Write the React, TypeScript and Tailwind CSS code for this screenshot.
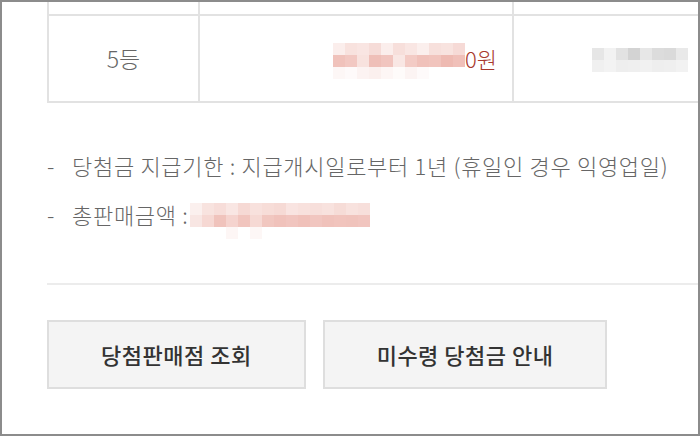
import React from "react";

const FONT = '"Noto Sans CJK KR", "Noto Sans", sans-serif';

// 모자이크(가림 처리) 블록
const Mosaic: React.FC<{ rows: string[][]; cw: number; ch: number }> = ({ rows, cw, ch }) => (
  <div className="flex flex-col">
    {rows.map((row, i) => (
      <div key={i} className="flex">
        {row.map((c, j) => (
          <div key={j} style={{ width: cw, height: ch, background: c }} />
        ))}
      </div>
    ))}
  </div>
);

const pinkRow: string[][] = [
  ["#fbeeec", "#f8e2de", "#f9e5e2", "#f6dcd8", "#fbeeec", "#f7dfdb", "#f9e6e3", "#fbefed", "#f7e0dc", "#f8e3df", "#f6dad6"],
  ["#f0c2bb", "#f2c8c2", "#f8e2de", "#efbfb8", "#f1c5bf", "#f9e7e4", "#f3cbc5", "#f0c1ba", "#f1c4bd", "#eebab2", "#f0c0b9"],
  ["#fdf7f6", "#fefafa", "#fcf3f2", "#fbf0ee", "#fdf6f5", "#fefbfa", "#fcf4f3", "#fefafa", "#ffffff", "#ffffff", "#ffffff"],
];

const grayRow: string[][] = [
  ["#e6e6e6", "#f2f2f2", "#e2e2e2", "#d3d3d3", "#e7e7e7", "#dcdcdc", "#dadada", "#e9e9e9"],
  ["#f0f0f0", "#f3f3f3", "#eeeeee", "#efefef", "#f1f1f1", "#eeeeee", "#efefef", "#f2f2f2"],
];

const salesRow: string[][] = [
  ["#fbf0ee", "#f8e3df", "#f7ddd9", "#f9e6e3", "#f6d9d4", "#f8e1dd", "#f7ddd8", "#f6dad5", "#f9e4e1", "#f8e1dd", "#f7dfdb", "#f8e2de", "#f6dcd7", "#f8e2de", "#f7dfdb"],
  ["#f8e6e3", "#f6d8d3", "#f0c3bc", "#f5d3ce", "#f1c5be", "#f6d9d4", "#f1c7c0", "#f0c2bb", "#f1c5bf", "#f0c1ba", "#f1c6c0", "#f0c2bb", "#f1c4bd", "#f0c3bc", "#f1c5bf"],
  ["#ffffff", "#ffffff", "#ffffff", "#fdf6f5", "#ffffff", "#fdf7f6", "#ffffff", "#ffffff", "#ffffff", "#ffffff", "#ffffff", "#ffffff", "#ffffff", "#ffffff", "#ffffff"],
];

export default function App() {
  return (
    <div
      className="w-[700px] h-[436px] bg-white border-2 border-[#8c8c8c] overflow-hidden"
      style={{ fontFamily: FONT }}
    >
      <div className="ml-[45px]">
        {/* 당첨 결과 표 */}
        <div className="grid grid-cols-[149px_314px_1fr] border-l-2 border-[#e2e2e2]">
          <div className="h-[12px]" />
          <div className="h-[12px] border-l-2 border-[#e2e2e2]" />
          <div className="h-[12px] border-l-2 border-[#e2e2e2]" />

          <div className="h-[89px] border-y-2 border-[#e2e2e2] flex items-center justify-center text-[23px] font-light text-[#666]">
            5등
          </div>
          <div className="h-[89px] border-y-2 border-l-2 border-[#e2e2e2] flex items-center justify-end pr-[15px]">
            <div className="mt-[4px]">
              <Mosaic rows={pinkRow} cw={12} ch={12} />
            </div>
            <span className="text-[22px] font-light text-[#a8392e]">0원</span>
          </div>
          <div className="h-[89px] border-y-2 border-l-2 border-[#e2e2e2] flex items-center justify-end pr-[10px]">
            <div className="mt-[2px]">
              <Mosaic rows={grayRow} cw={12} ch={12} />
            </div>
          </div>
        </div>

        {/* 안내 문구 */}
        <ul className="mt-[38px] text-[22px] font-light text-[#666] leading-[48px] tracking-[0.7px]">
          <li className="flex">
            <span className="w-[25px]">-</span>
            <span>당첨금 지급기한 : 지급개시일로부터 1년 (휴일인 경우 익영업일)</span>
          </li>
          <li className="flex items-center">
            <span className="w-[25px]">-</span>
            <span>총판매금액 :</span>
            <div className="ml-[2px] mt-[14px]">
              <Mosaic rows={salesRow} cw={12} ch={12} />
            </div>
          </li>
        </ul>

        <div className="mt-[44px] h-[2px] bg-[#ececec]" />

        {/* 버튼 */}
        <div className="mt-[35px] flex gap-[17px]">
          <button
            type="button"
            className="h-[69px] px-[52px] bg-[#f4f4f4] border-2 border-[#dedede] text-[22px] font-medium text-[#333] tracking-[0.5px]"
          >
            당첨판매점 조회
          </button>
          <button
            type="button"
            className="h-[69px] px-[52px] bg-[#f4f4f4] border-2 border-[#dedede] text-[22px] font-medium text-[#333] tracking-[0.5px]"
          >
            미수령 당첨금 안내
          </button>
        </div>
      </div>
    </div>
  );
}
